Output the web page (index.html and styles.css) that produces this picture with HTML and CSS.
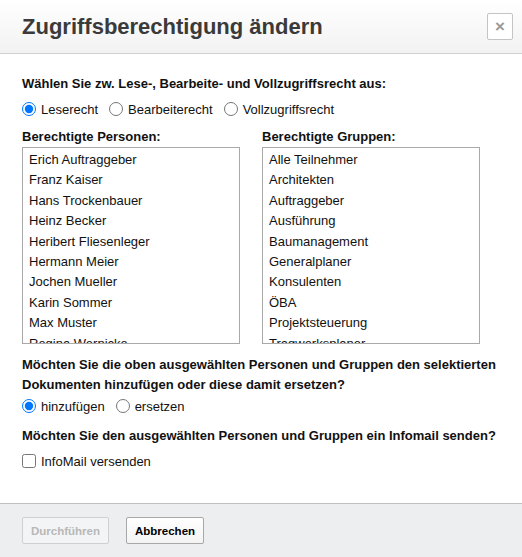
FILE: index.html
```html
<!DOCTYPE html>
<html lang="de">
<head>
    <meta charset="UTF-8">
    <title>Zugriffsberechtigung ändern</title>
    <link rel="stylesheet" href="styles.css">
</head>
<body>

<div class="dialog">
    <div class="dialog-header">
        <h1>Zugriffsberechtigung ändern</h1>
        <button type="button" class="close-btn">&times;</button>
    </div>

    <div class="dialog-body">
        <p class="question">Wählen Sie zw. Lese-, Bearbeite- und Vollzugriffsrecht aus:</p>
        <div class="options opt-recht">
            <label><input type="radio" name="recht" checked> Leserecht</label>
            <label><input type="radio" name="recht"> Bearbeiterecht</label>
            <label><input type="radio" name="recht"> Vollzugriffsrecht</label>
        </div>

        <div class="lists">
            <div class="list-col">
                <p class="list-title">Berechtigte Personen:</p>
                <div class="list-box">
                    <div>Erich Auftraggeber</div>
                    <div>Franz Kaiser</div>
                    <div>Hans Trockenbauer</div>
                    <div>Heinz Becker</div>
                    <div>Heribert Fliesenleger</div>
                    <div>Hermann Meier</div>
                    <div>Jochen Mueller</div>
                    <div>Karin Sommer</div>
                    <div>Max Muster</div>
                    <div>Regina Wernicke</div>
                </div>
            </div>
            <div class="list-col">
                <p class="list-title">Berechtigte Gruppen:</p>
                <div class="list-box">
                    <div>Alle Teilnehmer</div>
                    <div>Architekten</div>
                    <div>Auftraggeber</div>
                    <div>Ausführung</div>
                    <div>Baumanagement</div>
                    <div>Generalplaner</div>
                    <div>Konsulenten</div>
                    <div>ÖBA</div>
                    <div>Projektsteuerung</div>
                    <div>Tragwerksplaner</div>
                </div>
            </div>
        </div>

        <p class="question q-wide">Möchten Sie die oben ausgewählten Personen und Gruppen den selektierten Dokumenten hinzufügen oder diese damit ersetzen?</p>
        <div class="options">
            <label><input type="radio" name="modus" checked> hinzufügen</label>
            <label><input type="radio" name="modus"> ersetzen</label>
        </div>

        <p class="question q-mail">Möchten Sie den ausgewählten Personen und Gruppen ein Infomail senden?</p>
        <div class="options opt-mail">
            <label><input type="checkbox"> InfoMail versenden</label>
        </div>
    </div>

    <div class="dialog-footer">
        <button type="button" class="btn" disabled>Durchführen</button>
        <button type="button" class="btn">Abbrechen</button>
    </div>
</div>

</body>
</html>
```

FILE: styles.css
```css
body {
    margin: 0;
    font-family: 'Liberation Sans', Arial, sans-serif;
    font-size: 13px;
    color: #111;
    background: #fff;
}

.dialog {
    width: 522px;
    height: 557px;
    display: flex;
    flex-direction: column;
}

.dialog-header {
    height: 53px;
    border-bottom: 1px solid #cfcfcf;
    background: linear-gradient(#ffffff, #f2f2f2);
    display: flex;
    align-items: center;
    justify-content: space-between;
    padding: 0 9px 0 22px;
}

.dialog-header h1 {
    margin: 0;
    font-size: 22px;
    font-weight: bold;
    color: #3a3a3a;
}

.close-btn {
    width: 26px;
    height: 27px;
    padding: 0;
    border: 1px solid #c4c4c4;
    border-radius: 2px;
    background: #fff;
    color: #999;
    font-size: 17px;
    font-weight: bold;
    line-height: 22px;
    font-family: 'Liberation Sans', Arial, sans-serif;
}

.dialog-body {
    flex: 1;
    padding: 20px 22px 0;
}

.question {
    margin: 0;
    font-weight: bold;
    line-height: 20px;
}

.q-wide {
    margin-top: 11px;
}

.q-mail {
    margin-top: 9px;
}

.options {
    display: flex;
    gap: 11px;
    height: 22px;
    align-items: center;
}

.opt-recht {
    margin: 4px 0 8px;
}

.opt-mail {
    margin-top: 4px;
}

.options label {
    display: flex;
    align-items: center;
}

.options input {
    margin: 0 5px 0 0;
    width: 14px;
    height: 14px;
}

.lists {
    display: flex;
    gap: 22px;
}

.list-col {
    width: 218px;
}

.list-title {
    margin: 0 0 2px;
    font-weight: bold;
    line-height: 17px;
}

.list-box {
    height: 193px;
    border: 1px solid #a9a9a9;
    overflow: hidden;
    padding: 2px 6px 0;
}

.list-box div {
    line-height: 20.4px;
}

.dialog-footer {
    height: 53px;
    border-top: 1px solid #c0c0c0;
    background: #eceef0;
    display: flex;
    align-items: center;
    gap: 17px;
    padding: 0 22px;
}

.btn {
    height: 27px;
    padding: 0 8px;
    border: 1px solid #a8a8a8;
    border-radius: 2px;
    background: linear-gradient(#ffffff, #f3f3f3);
    font-family: 'Liberation Sans', Arial, sans-serif;
    font-size: 11.5px;
    font-weight: bold;
    color: #000;
}

.btn:disabled {
    border-color: #d0d0d0;
    background: #f3f4f5;
    color: #b8b8b8;
}
```
